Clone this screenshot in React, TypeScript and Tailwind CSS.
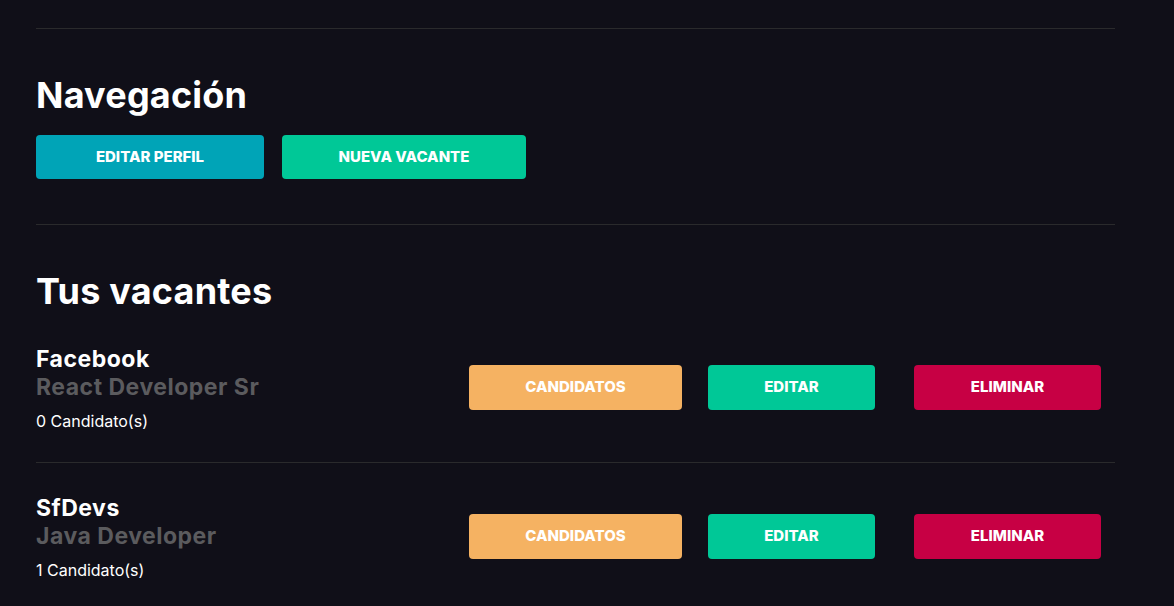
import React from "react";

const vacantes = [
  { empresa: "Facebook", puesto: "React Developer Sr", candidatos: "0 Candidato(s)" },
  { empresa: "SfDevs", puesto: "Java Developer", candidatos: "1 Candidato(s)" },
];

export default function App() {
  return (
    <div
      className="min-h-screen bg-[#100f18] text-white"
      style={{ fontFamily: "Inter, Roboto, 'Noto Sans', sans-serif" }}
    >
      <div className="ml-9 w-[1079px]">
        <div className="h-[28px]" />
        <div className="h-px bg-[#2a2a2c]" />
        <h2 className="mt-[46px] text-[36px] font-bold leading-[40px] tracking-[0.2px]">Navegación</h2>
        <div className="mt-[20px] flex gap-[18px]">
          <a className="flex h-[44px] w-[228px] items-center justify-center rounded-[4px] bg-[#00a4b7] text-[15px] font-extrabold uppercase">
            Editar Perfil
          </a>
          <a className="flex h-[44px] w-[244px] items-center justify-center rounded-[4px] bg-[#00c897] text-[15px] font-extrabold uppercase">
            Nueva Vacante
          </a>
        </div>
        <div className="mt-[45px] h-px bg-[#2a2a2c]" />
        <h2 className="mt-[46px] text-[36px] font-bold leading-[40px] tracking-[0.2px]">Tus vacantes</h2>
        <div>
          {vacantes.map((v, i) => (
            <div
              key={v.empresa}
              className={
                i === 0
                  ? "flex items-center border-b border-[#2a2a2c] pt-[35px] pb-[29px]"
                  : "flex items-center pt-[32px] pb-[33px]"
              }
            >
              <div className="flex-1">
                <p className="text-[23px] font-bold leading-[27px] tracking-[0.5px]">{v.empresa}</p>
                <p className="text-[23px] font-bold leading-[28px] tracking-[0.5px] text-[#5b5b5e]">{v.puesto}</p>
                <p className="mt-[8px] text-[16px] leading-[24px]">{v.candidatos}</p>
              </div>
              <a className="mb-[4px] flex h-[45px] w-[213px] items-center justify-center rounded-[4px] bg-[#f5b262] text-[15px] font-extrabold uppercase">
                Candidatos
              </a>
              <a className="mb-[4px] ml-[26px] flex h-[45px] w-[167px] items-center justify-center rounded-[4px] bg-[#00c897] text-[15px] font-extrabold uppercase">
                Editar
              </a>
              <a className="mb-[4px] ml-[39px] mr-[14px] flex h-[45px] w-[187px] items-center justify-center rounded-[4px] bg-[#c70044] text-[15px] font-extrabold uppercase">
                Eliminar
              </a>
            </div>
          ))}
        </div>
      </div>
    </div>
  );
}
